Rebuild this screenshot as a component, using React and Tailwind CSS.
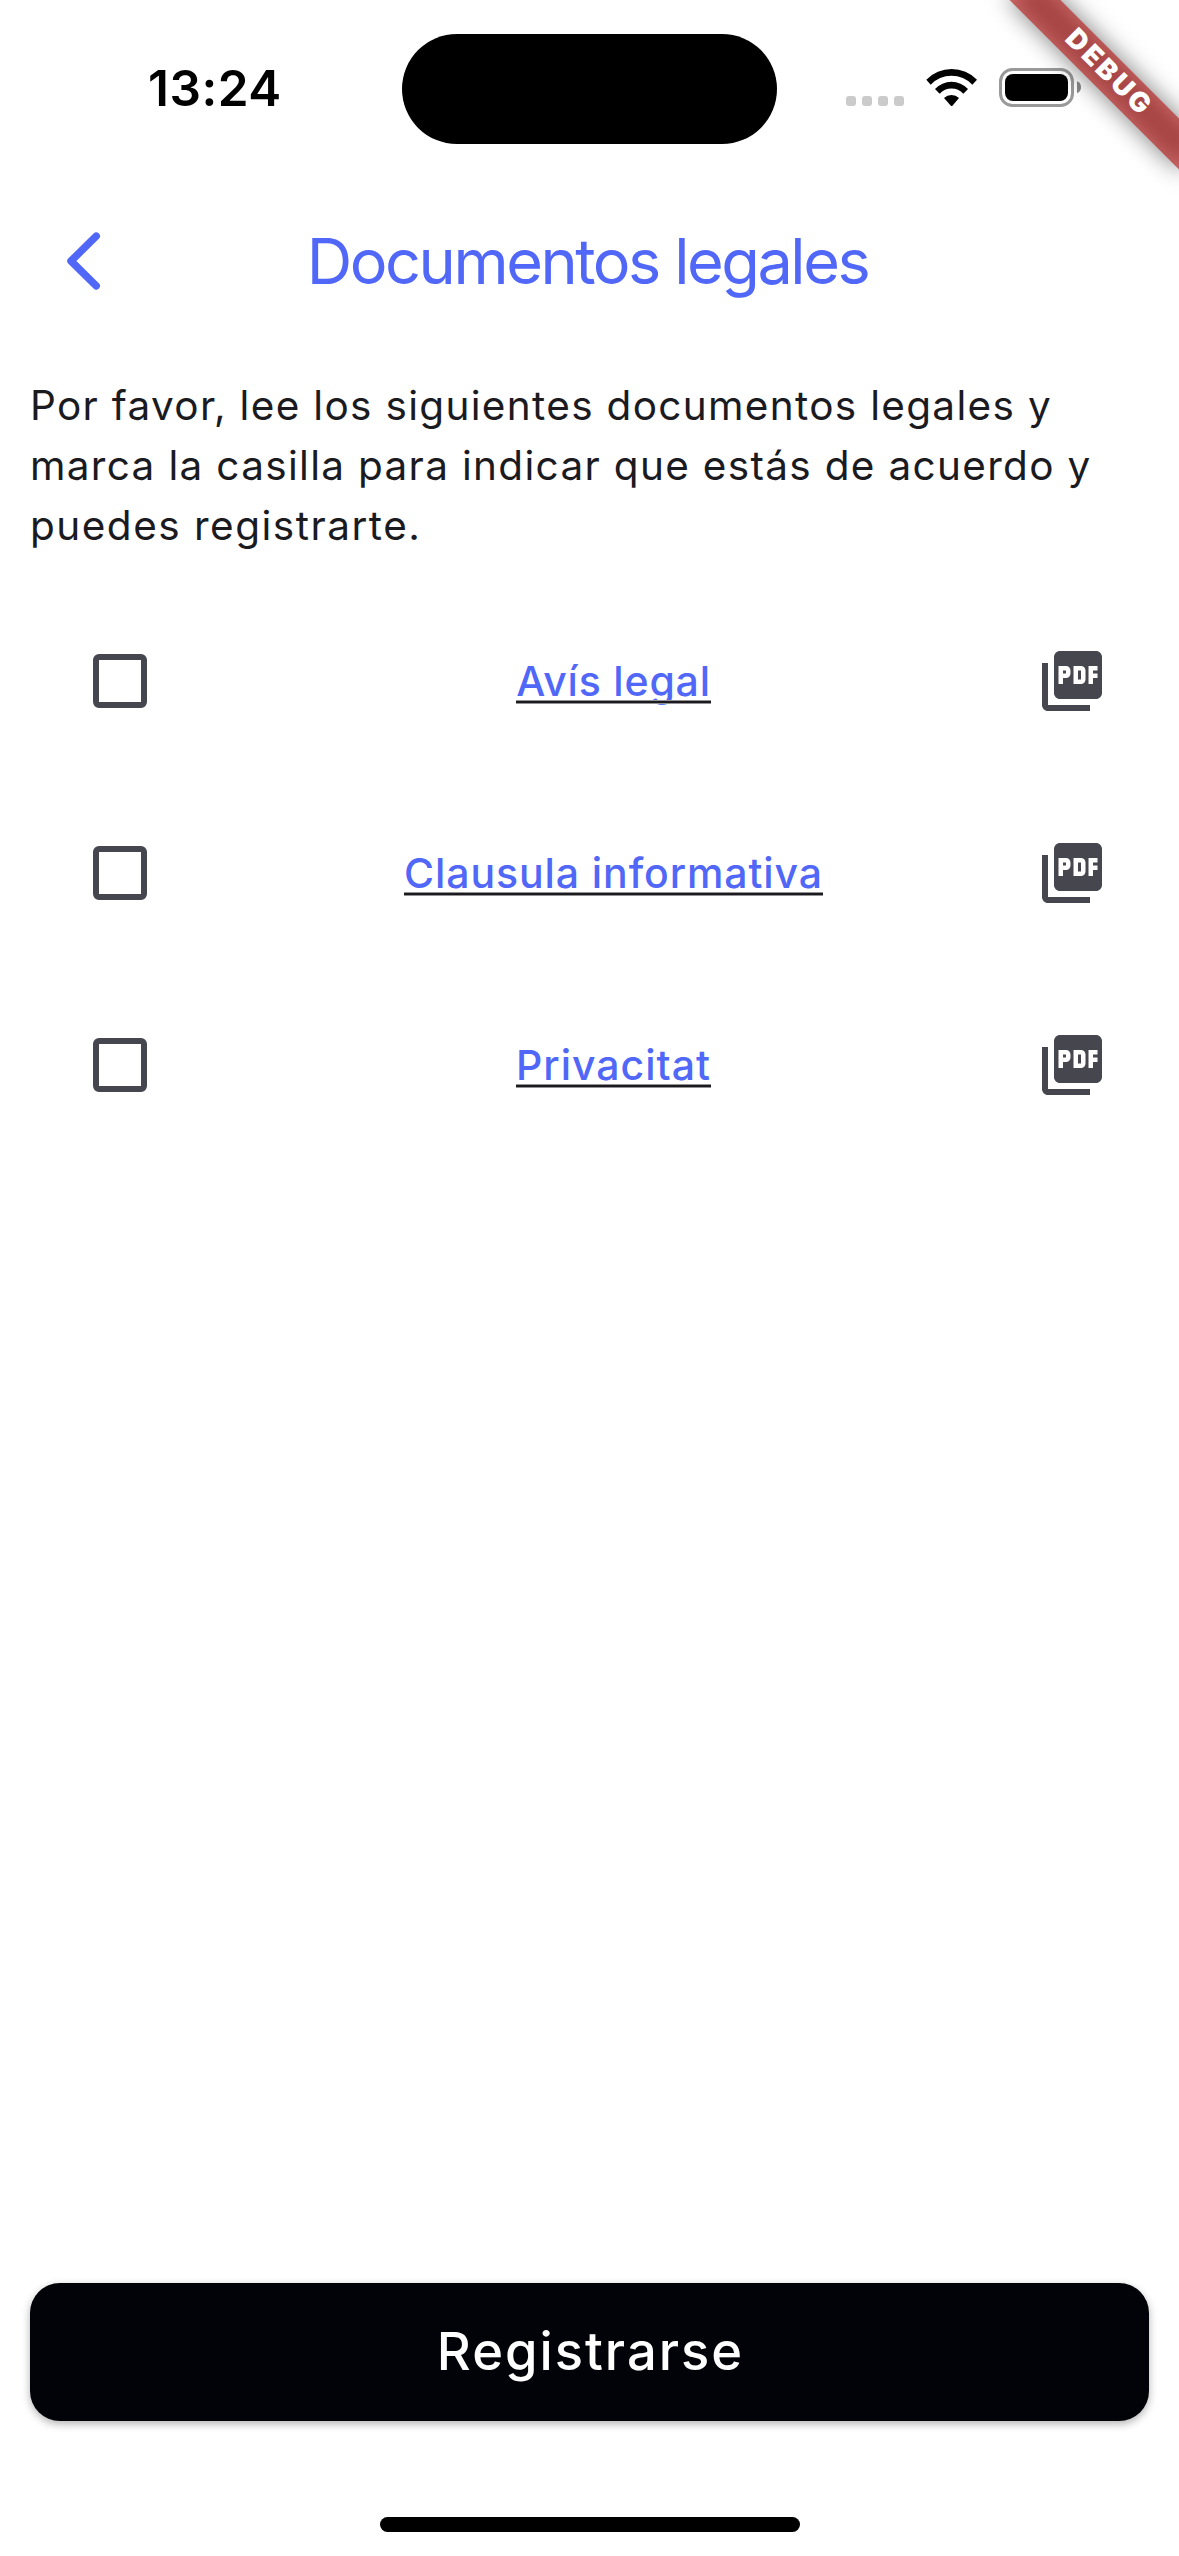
import { MdPictureAsPdf } from "react-icons/md";

const documents = [
  { name: "Avís legal", spacing: "tracking-[0.81px]" },
  { name: "Clausula informativa", spacing: "tracking-[0.91px]" },
  { name: "Privacitat", spacing: "tracking-[1px]" },
];

function StatusBar() {
  return (
    <div className="flex h-[177px] shrink-0 items-start pl-[148px]">
      <div className="mt-[58px] w-[254px] text-[49.5px] leading-[60px] font-semibold tracking-[0.5px] text-black">
        13:24
      </div>
      <div className="mt-[34px] h-[110px] w-[375px] rounded-full bg-black" />
      <div className="mt-[96px] ml-[69px] flex gap-[6px]">
        {[0, 1, 2, 3].map((dot) => (
          <span key={dot} className="size-[10px] rounded-[3px] bg-[#cbcbcb]" />
        ))}
      </div>
      <svg className="mt-[68px] ml-[21px] h-[40px] w-[54px]" viewBox="375 204 162 120" fill="#000">
        <path d="M379 239 A106 106 0 0 1 531 239 L517 254 A86 86 0 0 0 392 254 Z" />
        <path d="M405 267 A68 68 0 0 1 504 267 L490 281 A48 48 0 0 0 419 281 Z" />
        <path d="M432 294 A32 32 0 0 1 477 294 L458 316.5 Q455 319.500 452 316.500 Z" />
      </svg>
      <svg className="mt-[67px] ml-[20px] h-[41px] w-[84px]" viewBox="0 0 84 41" fill="none">
        <rect x="1.500" y="2.500" width="72" height="36" rx="12" stroke="#999" strokeWidth="3" />
        <rect x="6" y="7" width="63" height="27" rx="8" fill="#000" />
        <path d="M78 14.300 C80.800 15.200 82 17.600 82 20.200 C82 22.800 80.800 25.200 78 26.100 Z" fill="#888" />
      </svg>
    </div>
  );
}

function DebugBanner() {
  return (
    <div className="pointer-events-none absolute top-0 right-0 size-[240px] overflow-hidden">
      <div className="absolute top-[54px] left-[48px] h-[36px] w-[240px] rotate-45">
        <div className="absolute inset-0 bg-black/50 blur-[12px]" />
        <div className="absolute inset-0 flex items-center justify-center bg-[#b71c1c]/63">
          <span className="-mt-[3px] ml-[4px] text-[27.5px] leading-none font-black tracking-[2.9px] text-white">
            DEBUG
          </span>
        </div>
      </div>
    </div>
  );
}

function DocumentRow({ name, spacing }) {
  return (
    <div className="flex h-[192px] items-center pr-[71px] pl-[93px]">
      <button aria-label={name} className="size-[54px] shrink-0 rounded-[6px] border-[6px] border-[#46464f]" />
      <div className="flex flex-1 justify-center pl-[44px]">
        <a
          className={`relative text-[41px] leading-[60px] font-medium text-[#5067f8] after:absolute after:top-[49px] after:left-0 after:h-[4px] after:w-full after:border-y after:border-[#929294] after:bg-[#1b1b1f] ${spacing}`}
        >
          {name}
        </a>
      </div>
      <MdPictureAsPdf className="size-[72px] shrink-0 text-[#46464f]" />
    </div>
  );
}

export default function App() {
  return (
    <div className="relative flex h-[2556px] w-[1179px] flex-col overflow-hidden bg-white font-['Inter',sans-serif]">
      <StatusBar />
      <header className="relative flex h-[168px] shrink-0 items-center justify-center text-[#5067f8]">
        <svg className="absolute top-[52px] left-[63px] h-[64px] w-[42px]" viewBox="0 0 42 64" fill="none">
          <path
            d="M33.200 7.200 L8 32 L33.200 56.800"
            stroke="currentColor"
            strokeWidth="7.5"
            strokeLinecap="round"
            strokeLinejoin="round"
          />
        </svg>
        <h1 className="mr-[4px] text-[63px] leading-[80px] tracking-[-2.45px]">Documentos legales</h1>
      </header>
      <p className="pt-[31px] pl-[30px] text-[40.5px] leading-[60px] tracking-[1.32px] whitespace-nowrap text-[#1b1b1f]">
        Por favor, lee los siguientes documentos legales y<br />
        marca la casilla para indicar que estás de acuerdo y<br />
        <span className="tracking-[1.5px]">puedes registrarte.</span>
      </p>
      <main className="pt-[29px]">
        {documents.map((doc) => (
          <DocumentRow key={doc.name} {...doc} />
        ))}
      </main>
      <footer className="mt-auto flex flex-col items-center px-[30px] pb-[24px]">
        <button className="h-[138px] w-full rounded-[30px] bg-[#020209] pb-[2px] pl-[2px] text-[52.5px] font-medium tracking-[2px] text-white shadow-[0_3px_8px_rgba(0,0,0,0.3)]">
          Registrarse
        </button>
        <div className="mt-[96px] h-[15px] w-[420px] rounded-full bg-black" />
      </footer>
      <DebugBanner />
    </div>
  );
}
